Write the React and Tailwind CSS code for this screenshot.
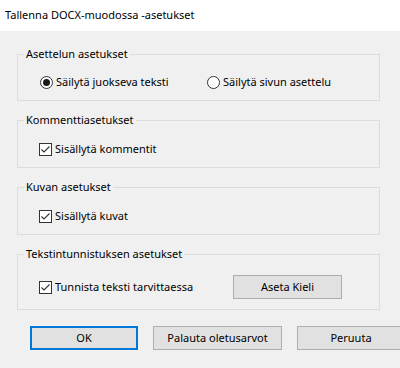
import React, { useState } from "react";

const font = { fontFamily: '"Noto Sans", "Liberation Sans", sans-serif' };

const Radio = ({ checked, label, onClick }) => (
  <label className="flex items-center gap-[3px] cursor-default" onClick={onClick}>
    <span className="w-[13px] h-[13px] rounded-full border border-[#333333] bg-white flex items-center justify-center">
      {checked && <span className="w-[7px] h-[7px] rounded-full bg-[#1a1a1a]" />}
    </span>
    <span>{label}</span>
  </label>
);

const Check = ({ checked, label, onClick }) => (
  <label className="flex items-center gap-[3px] cursor-default" onClick={onClick}>
    <span className="w-[13px] h-[13px] border border-[#333333] bg-white flex items-center justify-center">
      {checked && (
        <svg width="11" height="11" viewBox="0 0 11 11">
          <path d="M1.5 5.5 L4 8 L9.5 2.5" fill="none" stroke="#333333" strokeWidth="1.1" />
        </svg>
      )}
    </span>
    <span>{label}</span>
  </label>
);

const Group = ({ title, first, children }) => (
  <fieldset className={`border border-[#dcdcdc] w-[363px] pb-[10px] ${first ? "pt-[12px]" : "pt-[13px]"}`}>
    <legend className="ml-[6px] px-[2px] leading-[16px]">{title}</legend>
    {children}
  </fieldset>
);

const Button = ({ children, primary, className = "" }) => (
  <button
    className={`h-[24px] bg-[#e1e1e1] text-black ${
      primary ? "border-2 border-[#0078d7]" : "border border-[#adadad]"
    } ${className}`}
  >
    {children}
  </button>
);

export default function App() {
  const [layout, setLayout] = useState("flow");
  const [comments, setComments] = useState(true);
  const [images, setImages] = useState(true);
  const [ocr, setOcr] = useState(true);

  return (
    <div className="w-[400px] h-[368px] bg-[#f0f0f0] text-[11px] text-black overflow-hidden" style={font}>
      <div className="h-[31px] bg-white pl-[5px] pt-[7px] leading-[16px]">Tallenna DOCX-muodossa -asetukset</div>

      <div className="pl-[17px] pt-[15px] flex flex-col gap-[11px]">
        <Group title="Asettelun asetukset" first>
          <div className="flex items-center h-[16px] pl-[22px]">
            <div className="w-[167px]">
              <Radio checked={layout === "flow"} label="Säilytä juokseva teksti" onClick={() => setLayout("flow")} />
            </div>
            <Radio checked={layout === "page"} label="Säilytä sivun asettelu" onClick={() => setLayout("page")} />
          </div>
        </Group>

        <Group title="Kommenttiasetukset">
          <div className="flex items-center h-[16px] pl-[21px]">
            <Check checked={comments} label="Sisällytä kommentit" onClick={() => setComments(!comments)} />
          </div>
        </Group>

        <Group title="Kuvan asetukset">
          <div className="flex items-center h-[16px] pl-[21px]">
            <Check checked={images} label="Sisällytä kuvat" onClick={() => setImages(!images)} />
          </div>
        </Group>

        <Group title="Tekstintunnistuksen asetukset">
          <div className="flex items-center h-[24px] pl-[21px]">
            <div className="w-[194px]">
              <Check checked={ocr} label="Tunnista teksti tarvittaessa" onClick={() => setOcr(!ocr)} />
            </div>
            <Button className="w-[109px]">Aseta Kieli</Button>
          </div>
        </Group>
      </div>

      <div className="flex gap-[15px] pl-[30px] mt-[16px]">
        <Button primary className="w-[108px] shrink-0">OK</Button>
        <Button className="w-[129px] shrink-0">Palauta oletusarvot</Button>
        <Button className="w-[108px] shrink-0">Peruuta</Button>
      </div>
    </div>
  );
}
